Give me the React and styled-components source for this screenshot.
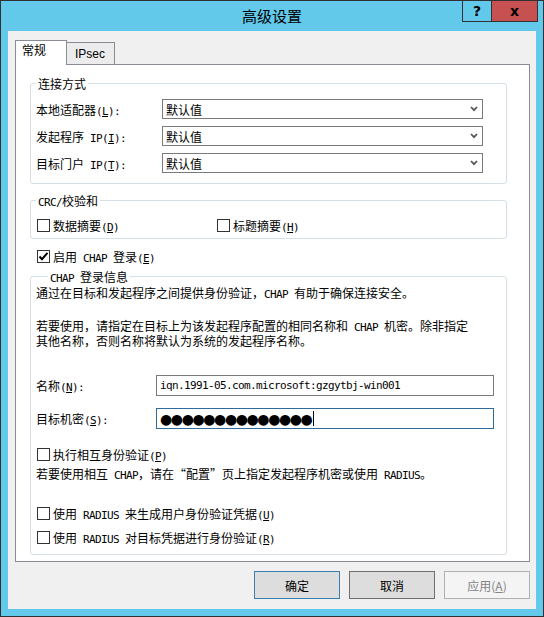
import React from 'react';
import styled, { createGlobalStyle } from 'styled-components';

const cyan = '#63c9ea';
const frameLine = '#898c95';
const groupLine = '#d5dfe5';
const cjk = '"Noto Sans CJK SC", sans-serif';
const ui = '"Liberation Sans", "Noto Sans CJK SC", sans-serif';

const GlobalStyle = createGlobalStyle`
  html, body {
    margin: 0;
    padding: 0;
    background: #fff;
  }
  body {
    font-family: ${cjk};
    font-size: 12px;
    color: #000;
  }
  * {
    box-sizing: border-box;
  }
`;

// SimSun-ish text: half width latin runs, "&" marks the access key
const Latin = styled.span`
  font-family: "DejaVu Sans Mono", "Liberation Mono", monospace;
  font-size: 11px;
  line-height: 1;
  letter-spacing: -0.62px;
`;

const Key = styled.u`
  text-underline-offset: 1px;
`;

function keyed(str, prefix) {
  const bits = str.split('&');
  return bits.map((b, i) =>
    i === 0 ? b : (
      <React.Fragment key={`${prefix}-${i}`}>
        <Key>{b[0]}</Key>
        {b.slice(1)}
      </React.Fragment>
    )
  );
}

const Sim = ({ text }) =>
  text
    .split(/([\x20-\x7e]+)/)
    .filter(Boolean)
    .map((run, i) =>
      /^[\x20-\x7e]+$/.test(run) ? (
        <Latin key={i}>{keyed(run, i)}</Latin>
      ) : (
        <React.Fragment key={i}>{run}</React.Fragment>
      )
    );

const Window = styled.div`
  width: 544px;
  height: 617px;
  background: ${cyan};
  border: 1px solid #2f3133;
  display: flex;
  flex-direction: column;
`;

const TitleBar = styled.div`
  height: 30px;
  display: grid;
  grid-template-columns: 1fr auto 1fr;
  align-items: start;
`;

const Title = styled.div`
  grid-column: 2;
  font-family: ${cjk};
  font-size: 15px;
  line-height: 30px;
`;

const CaptionButtons = styled.div`
  grid-column: 3;
  justify-self: end;
  display: flex;
  margin: -1px 5px 0 0;
`;

const CaptionButton = styled.div`
  width: ${(p) => (p.$close ? 47 : 29)}px;
  height: 22px;
  border: 1px solid #2f3133;
  border-right: ${(p) => (p.$close ? '1px solid #2f3133' : 'none')};
  background: ${(p) => (p.$close ? '#c75050' : cyan)};
  display: flex;
  align-items: center;
  justify-content: center;
  font-family: "DejaVu Sans", sans-serif;
  font-weight: bold;
  font-size: 14px;
  color: #000;
`;

const Client = styled.div`
  flex: 1;
  margin: 0 7px 7px;
  background: #f0f0f0;
  padding: 9px 6px 10px 7px;
  display: flex;
  flex-direction: column;
`;

const TabStrip = styled.div`
  height: 24px;
  display: flex;
  align-items: flex-end;
`;

const Tab = styled.div`
  position: relative;
  z-index: 1;
  width: ${(p) => (p.$active ? 52 : 48)}px;
  height: ${(p) => (p.$active ? 25 : 22)}px;
  margin-bottom: ${(p) => (p.$active ? -1 : 0)}px;
  padding: ${(p) => (p.$active ? '2px 0 0 6px' : '3px 0 0 8px')};
  background: ${(p) => (p.$active ? '#fff' : '#ececec')};
  border: 1px solid ${frameLine};
  border-bottom: none;
  border-left: ${(p) => (p.$active ? `1px solid ${frameLine}` : 'none')};
  font-family: ${ui};
  font-size: 12px;
  line-height: 16px;
`;

const Panel = styled.div`
  height: 498px;
  flex-shrink: 0;
  background: #fff;
  border: 1px solid ${frameLine};
  display: flex;
  flex-direction: column;
  line-height: 15px;
`;

const Group = styled.div`
  margin: ${(p) => p.$top}px 22px 0 14px;
  border: 1px solid ${groupLine};
  border-radius: 3px;
`;

const Legend = styled.div`
  width: fit-content;
  height: 15px;
  margin: -8px 0 0 ${(p) => p.$indent}px;
  padding: 0 2px;
  background: #fff;
  line-height: 15px;
`;

const FieldGrid = styled.div`
  display: grid;
  grid-template-columns: ${(p) => p.$label}px ${(p) => p.$field}px;
  row-gap: ${(p) => p.$gap}px;
  align-items: center;
  padding: ${(p) => p.$pad};
  margin-top: ${(p) => p.$top || 0}px;
`;

const Select = styled.div`
  height: 20px;
  border: 1px solid #7a7a7a;
  background: #fff;
  display: flex;
  align-items: center;
  justify-content: space-between;
  padding: 0 4px 0 3px;
`;

const TextBox = styled.div`
  height: 21px;
  border: 1px solid ${(p) => (p.$focused ? '#2f6a9c' : '#7a7a7a')};
  background: #fff;
  display: flex;
  align-items: center;
  padding: 0 3px;
  white-space: nowrap;
  overflow: hidden;
`;

const Dots = styled.span`
  font-family: "DejaVu Sans", sans-serif;
  font-size: 14px;
  line-height: 1;
  letter-spacing: -1.4px;
`;

const Caret = styled.span`
  display: inline-block;
  width: 1px;
  height: 15px;
  margin-left: 2px;
  background: #000;
`;

const CheckGrid = styled.div`
  display: grid;
  grid-template-columns: 180px auto;
  padding: 8px 0 4px 6px;
`;

const CheckRow = styled.div`
  display: flex;
  align-items: center;
  gap: 3px;
  height: 18px;
  margin: ${(p) => p.$margin || '0'};
`;

const Box = styled.span`
  width: 13px;
  height: 13px;
  border: 1px solid #333;
  background: #fff;
  display: flex;
  align-items: center;
  justify-content: center;
`;

const GroupBody = styled.div`
  padding: 1px 0 8px 5px;
`;

const Line = styled.div`
  height: 15px;
  margin-top: ${(p) => p.$top || 0}px;
  white-space: nowrap;
`;

const ButtonRow = styled.div`
  display: flex;
  justify-content: flex-end;
  gap: 9px;
  margin-top: 9px;
`;

const Button = styled.div`
  width: 86px;
  height: 28px;
  display: flex;
  align-items: center;
  justify-content: center;
  font-family: ${cjk};
  font-size: 12px;
  background: ${(p) => (p.$disabled ? '#f4f4f4' : '#dddddd')};
  border: 1px solid
    ${(p) => (p.$default ? '#3c7fb1' : p.$disabled ? '#adb2b5' : '#707070')};
  color: ${(p) => (p.$disabled ? '#838383' : '#000')};
`;

const Chevron = () => (
  <svg width="8" height="6" viewBox="0 0 8 6">
    <polyline points="1,1 4,4.2 7,1" fill="none" stroke="#555" strokeWidth="1.8" />
  </svg>
);

const CheckBox = ({ checked, label, margin }) => (
  <CheckRow $margin={margin}>
    <Box>
      {checked && (
        <svg width="11" height="11" viewBox="0 0 11 11">
          <polyline points="1.5,5.5 4,8.2 9.5,1.8" fill="none" stroke="#000" strokeWidth="2" />
        </svg>
      )}
    </Box>
    <span>
      <Sim text={label} />
    </span>
  </CheckRow>
);

const adapters = [
  ['本地适配器(&L):', '默认值'],
  ['发起程序 IP(&I):', '默认值'],
  ['目标门户 IP(&T):', '默认值'],
];

export default function App() {
  return (
    <>
      <GlobalStyle />
      <Window>
        <TitleBar>
          <Title>高级设置</Title>
          <CaptionButtons>
            <CaptionButton>?</CaptionButton>
            <CaptionButton $close>x</CaptionButton>
          </CaptionButtons>
        </TitleBar>
        <Client>
          <TabStrip>
            <Tab $active>常规</Tab>
            <Tab>IPsec</Tab>
          </TabStrip>
          <Panel>
            <Group $top={18}>
              <Legend $indent={5}>连接方式</Legend>
              <FieldGrid $label={126} $field={321} $gap={7} $pad="8px 0 10px 5px">
                {adapters.map(([label, value]) => (
                  <React.Fragment key={label}>
                    <span>
                      <Sim text={label} />
                    </span>
                    <Select>
                      <span>{value}</span>
                      <Chevron />
                    </Select>
                  </React.Fragment>
                ))}
              </FieldGrid>
            </Group>

            <Group $top={16}>
              <Legend $indent={5}>
                <Sim text="CRC/校验和" />
              </Legend>
              <CheckGrid>
                <CheckBox label="数据摘要(&D)" />
                <CheckBox label="标题摘要(&H)" />
              </CheckGrid>
            </Group>

            <CheckBox checked label="启用 CHAP 登录(&E)" margin="8px 0 0 21px" />

            <Group $top={11}>
              <Legend $indent={17}>
                <Sim text="CHAP 登录信息" />
              </Legend>
              <GroupBody>
                <Line>
                  <Sim text="通过在目标和发起程序之间提供身份验证，CHAP 有助于确保连接安全。" />
                </Line>
                <Line $top={18}>
                  <Sim text="若要使用，请指定在目标上为该发起程序配置的相同名称和 CHAP 机密。除非指定" />
                </Line>
                <Line>其他名称，否则名称将默认为系统的发起程序名称。</Line>

                <FieldGrid $label={120} $field={338} $gap={12} $pad="0" $top={27}>
                  <span>
                    <Sim text="名称(&N):" />
                  </span>
                  <TextBox>
                    <Latin>iqn.1991-05.com.microsoft:gzgytbj-win001</Latin>
                  </TextBox>
                  <span>
                    <Sim text="目标机密(&S):" />
                  </span>
                  <TextBox $focused>
                    <Dots>{'●'.repeat(14)}</Dots>
                    <Caret />
                  </TextBox>
                </FieldGrid>

                <CheckBox label="执行相互身份验证(&P)" margin="16px 0 0 1px" />
                <Line $top={3}>
                  <Sim text="若要使用相互 CHAP，请在“配置”页上指定发起程序机密或使用 RADIUS。" />
                </Line>
                <CheckBox label="使用 RADIUS 来生成用户身份验证凭据(&U)" margin="23px 0 0 1px" />
                <CheckBox label="使用 RADIUS 对目标凭据进行身份验证(&R)" margin="6px 0 0 1px" />
              </GroupBody>
            </Group>
          </Panel>

          <ButtonRow>
            <Button $default>确定</Button>
            <Button>取消</Button>
            <Button $disabled>
              应用(<Key>A</Key>)
            </Button>
          </ButtonRow>
        </Client>
      </Window>
    </>
  );
}
